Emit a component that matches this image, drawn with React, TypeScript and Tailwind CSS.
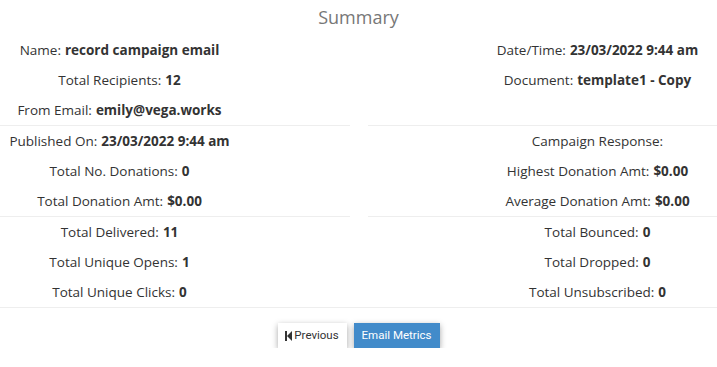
export default function App() {
  // Summary rows - left/right columns of a 3-col grid, middle stays empty
  const blocks = [
    {
      left: [
        ['Name:', 'record campaign email'],
        ['Total Recipients:', '12'],
        ['From Email:', 'emily@vega.works'],
      ],
      right: [
        ['Date/Time:', '23/03/2022 9:44 am'],
        ['Document:', 'template1 - Copy'],
        ['', ''],
      ],
    },
    {
      left: [
        ['Published On:', '23/03/2022 9:44 am'],
        ['Total No. Donations:', '0'],
        ['Total Donation Amt:', '$0.00'],
      ],
      right: [
        ['Campaign Response:', ''],
        ['Highest Donation Amt:', '$0.00'],
        ['Average Donation Amt:', '$0.00'],
      ],
    },
    {
      left: [
        ['Total Delivered:', '11'],
        ['Total Unique Opens:', '1'],
        ['Total Unique Clicks:', '0'],
      ],
      right: [
        ['Total Bounced:', '0'],
        ['Total Dropped:', '0'],
        ['Total Unsubscribed:', '0'],
      ],
    },
  ]

  const Row = ({ label, value }: { label: string; value: string }) => (
    <div className="h-[30px] flex items-center justify-center whitespace-nowrap">
      {label}
      {value && <b className="font-bold ml-1">{value}</b>}
    </div>
  )

  return (
    <div className="w-[717px] bg-white text-[13.5px] text-[#333] font-['Open_Sans',sans-serif]">
      <h2 className="h-[35px] flex items-center justify-center text-[18px] text-[#777] font-normal">Summary</h2>

      {blocks.map((block, i) => (
        <div key={i}>
          <div className="grid grid-cols-3">
            <div>
              {block.left.map(([l, v], j) => (
                <Row key={j} label={l} value={v} />
              ))}
            </div>
            <div />
            <div>
              {block.right.map(([l, v], j) => (
                <Row key={j} label={l} value={v} />
              ))}
            </div>
          </div>
          {i < blocks.length - 1 ? (
            <div className="grid grid-cols-[350px_1fr] gap-[18px]">
              <div className="border-t border-[#eee]" />
              <div className="border-t border-[#eee]" />
            </div>
          ) : (
            <div className="border-t border-[#eee]" />
          )}
        </div>
      ))}

      <div className="flex justify-center gap-[7px] pt-[15px] font-['Roboto',sans-serif] text-[11.5px]">
        <button className="h-[25px] w-[69px] flex items-center justify-center gap-[2px] bg-white text-[#333] shadow-[0_2px_6px_rgba(0,0,0,0.35)]">
          <svg width="7" height="10" viewBox="0 0 7 10" fill="#333">
            <rect x="0" y="0" width="2" height="10" />
            <path d="M7 0 L2 5 L7 10 Z" />
          </svg>
          Previous
        </button>
        <button className="h-[25px] w-[86px] flex items-center justify-center bg-[#428bca] text-white shadow-[0_2px_6px_rgba(0,0,0,0.35)]">
          Email Metrics
        </button>
      </div>
    </div>
  )
}
